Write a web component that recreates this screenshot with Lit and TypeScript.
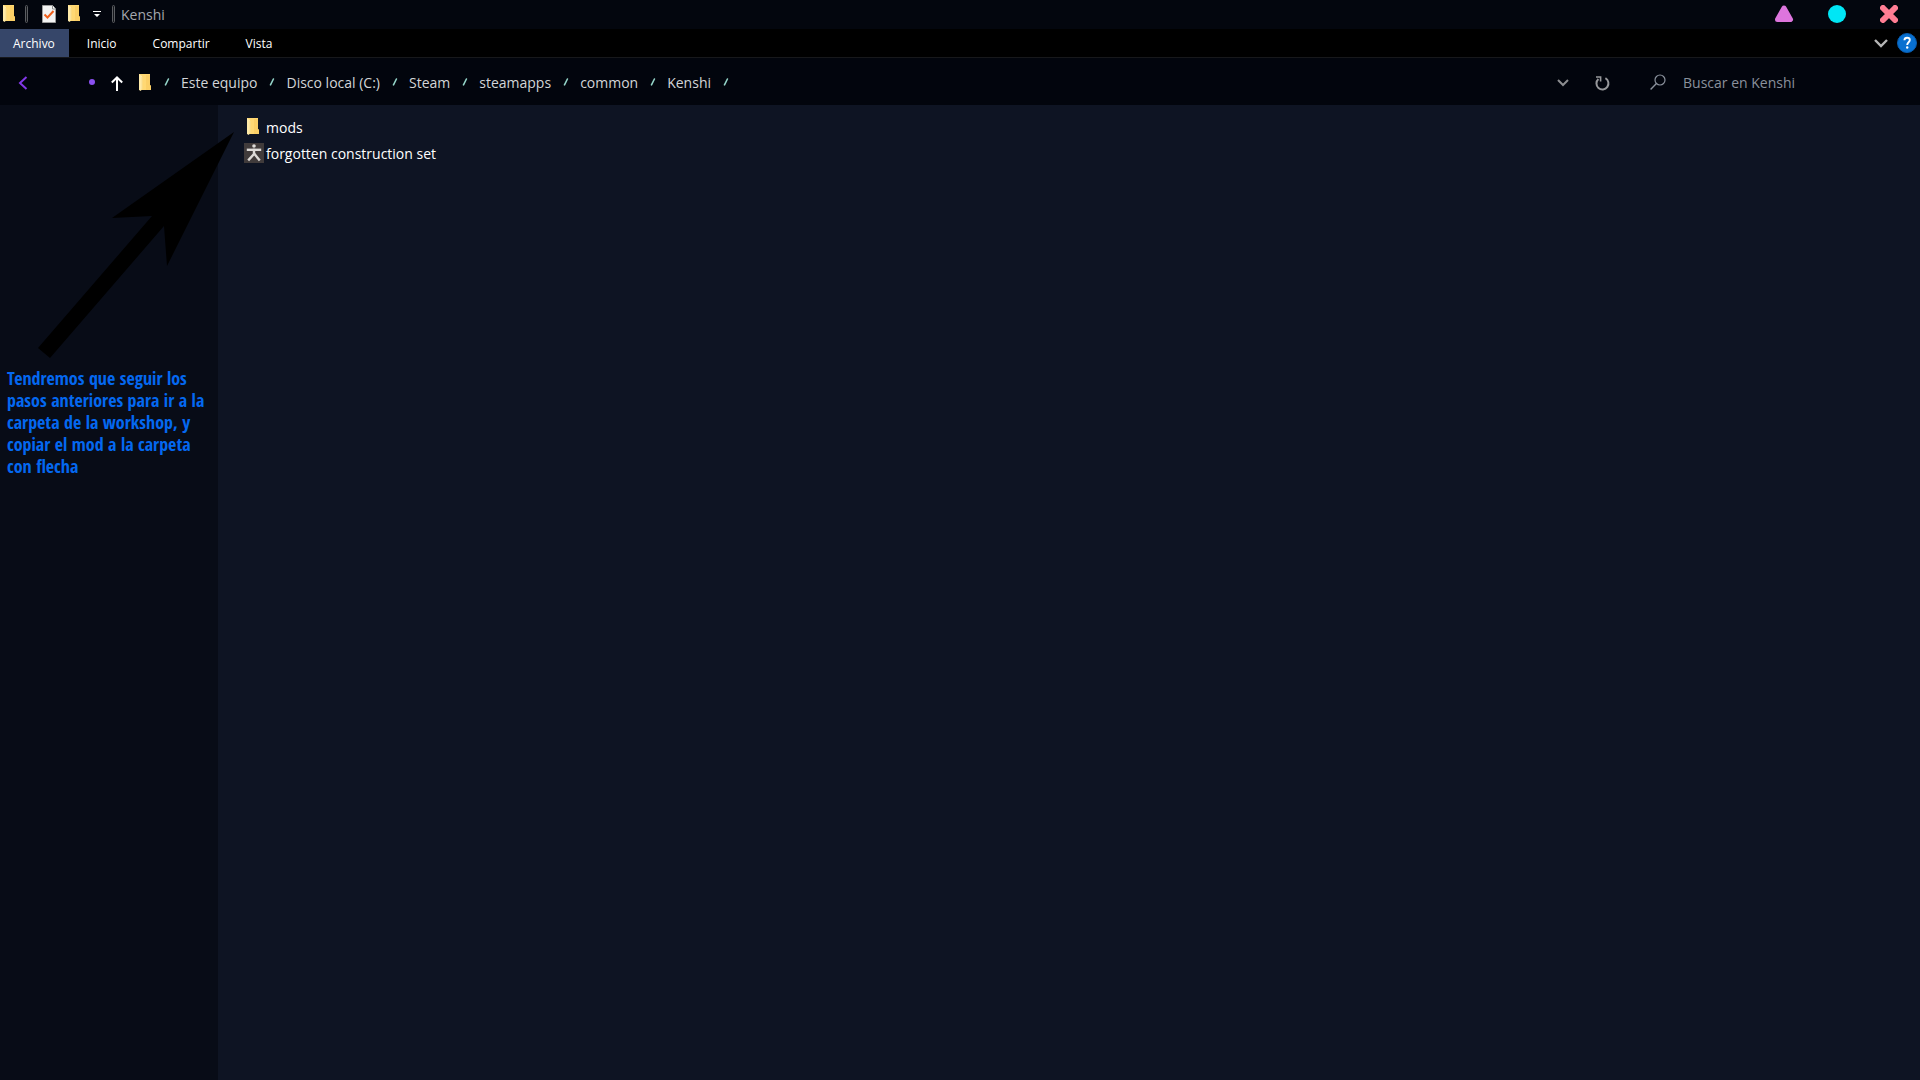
import { LitElement, html, css, svg } from "lit";
import { customElement } from "lit/decorators.js";

const folder = html`<svg class="folder" width="14" height="18" viewBox="0 0 14 18" aria-hidden="true">
  <path d="M1 0H12V11L13 12V16H1Z" fill="#ffd873" />
  <path d="M8 1H12V11L13 12V16H8Z" fill="#fbcf66" />
  <path d="M1 0L4 2V14L3 17L1 16Z" fill="#ffeaa8" />
  <path d="M4 3V15" stroke="#f7dc8f" />
</svg>`;

const slash = html`<svg class="slash" width="6" height="8" viewBox="0 0 6 8" aria-hidden="true">
  <path d="M1.5 6.8L4.4 1" stroke="#93d3c7" stroke-width="1.6" stroke-linecap="round" />
</svg>`;

const bar = html`<svg class="bar" width="4" height="18" viewBox="0 0 4 18" aria-hidden="true">
  <rect x="0.5" y="0.5" width="2" height="17" rx="1" fill="#15171c" stroke="#5b5d61" />
</svg>`;

const limb = (d: string) => svg`<path d=${d} stroke="#dcdad8" stroke-width="2.4" fill="none" stroke-linecap="square" />`;

@customElement("app-root")
export class AppRoot extends LitElement {
  static styles = css`
    :host {
      display: flex;
      flex-direction: column;
      min-height: 100vh;
      position: relative;
      background: #0e1423;
      color: #fff;
      font: 14px/20px "Segoe UI", "Open Sans", "Noto Sans", sans-serif;
    }
    * { box-sizing: border-box; }
    svg { display: block; flex: none; }
    button, input {
      font: inherit;
      color: inherit;
      background: none;
      border: 0;
      padding: 0;
      margin: 0;
      outline: 0;
    }
    a { color: inherit; text-decoration: none; }
    .title {
      display: flex;
      align-items: center;
      height: 29px;
      padding: 0 22px 1px 2px;
      background: #03060e;
    }
    .lead { padding: 0 10px 0 9px; }
    .check { margin: 0 11px 0 3px; }
    .custom { margin: 0 11px 0 12px; }
    h1 {
      margin: 0 auto 0 5px;
      padding-top: 2px;
      font-size: 14px;
      line-height: 20px;
      font-weight: 400;
      color: #a5a8ae;
    }
    .window { display: flex; gap: 34px; }
    .ribbon {
      display: flex;
      align-items: stretch;
      height: 29px;
      background: #000;
      border-bottom: 1px solid #17181b;
      font-size: 12px;
    }
    .tab { padding: 1px 18px 0; }
    .tab.active { padding: 1px 14px 0 13px; background: #364669; }
    .tools {
      display: flex;
      align-items: center;
      gap: 9px;
      margin-left: auto;
      padding-right: 3px;
    }
    .address {
      display: flex;
      align-items: center;
      height: 47px;
      padding-top: 3px;
      background: #02050d;
      color: #d3d5d8;
    }
    .back { margin-left: 18px; }
    .dot { margin: 0 16px 2px 61px; }
    .up { margin-right: 15px; }
    .crumbs {
      display: flex;
      align-items: center;
      margin: 0;
      padding: 0 0 0 12px;
      list-style: none;
      flex: 1;
    }
    .crumbs li { display: flex; align-items: center; }
    .crumbs .slash { margin: 0 11px 2px 12px; }
    .crumbs li:first-child .slash { margin-left: 0; }
    .drop { margin-right: 26px; }
    .search {
      display: flex;
      align-items: center;
      gap: 17px;
      width: 270px;
      margin-left: 40px;
      color: #8d939d;
    }
    .search svg { margin-bottom: 2px; }
    .search input { flex: 1; min-width: 0; }
    .search input::placeholder { color: #8a919c; opacity: 1; }
    .body { display: flex; flex: 1; }
    .side {
      width: 218px;
      background: #080c17;
      padding: 262px 0 0 7px;
    }
    .note {
      margin: 0;
      color: #0468f0;
      font: 700 18px/22px "Open Sans Condensed", "Noto Sans Condensed", "Open Sans", sans-serif;
      white-space: nowrap;
    }
    .files {
      flex: 1;
      margin: 0;
      padding: 10px 26px;
      list-style: none;
    }
    .files a { display: flex; align-items: center; gap: 2px; height: 26px; }
    .thumb { width: 20px; margin-bottom: 2px; flex: none; }
    .thumb .folder { margin-left: 2px; }
    .arrow { position: absolute; left: 38px; top: 132px; pointer-events: none; }
  `;

  private crumbs = ["Este equipo", "Disco local (C:)", "Steam", "steamapps", "common", "Kenshi"];

  render() {
    return html`
      <header class="title">
        ${folder}
        <span class="lead">${bar}</span>
        <button class="check" aria-label="Propiedades">
          <svg width="14" height="18" viewBox="0 0 14 18">
            <path d="M0.5 0.5H10.5L13.5 4V17.5H0.5Z" fill="#f3f3f3" stroke="#9c9c9c" />
            <path d="M10.5 0.5V4H13.5" fill="#fff" stroke="#8c8c8c" />
            <path d="M2.5 9.5L5.5 12.5L11.5 6" fill="none" stroke="#f0601c" stroke-width="2" />
          </svg>
        </button>
        <button aria-label="Nueva carpeta">${folder}</button>
        <button class="custom" aria-label="Personalizar">
          <svg width="8" height="8" viewBox="0 0 8 8" fill="#fff">
            <path d="M0 1H8V2H0ZM1 4H7L4 7Z" />
          </svg>
        </button>
        ${bar}
        <h1>Kenshi</h1>
        <div class="window">
          <button aria-label="Minimizar">
            <svg width="20" height="18" viewBox="0 0 20 18">
              <path d="M10 3L16.5 14.5H3.5Z" fill="#dd75dd" stroke="#dd75dd" stroke-width="5" stroke-linejoin="round" />
            </svg>
          </button>
          <button aria-label="Maximizar">
            <svg width="18" height="18" viewBox="0 0 18 18"><circle cx="9" cy="9" r="9" fill="#00e6f5" /></svg>
          </button>
          <button aria-label="Cerrar">
            <svg width="18" height="18" viewBox="0 0 18 18">
              <path d="M3 3L15 15M15 3L3 15" stroke="#ff7d94" stroke-width="6" stroke-linecap="round" />
            </svg>
          </button>
        </div>
      </header>

      <nav class="ribbon">
        <button class="tab active">Archivo</button>
        <button class="tab">Inicio</button>
        <button class="tab">Compartir</button>
        <button class="tab">Vista</button>
        <div class="tools">
          <button aria-label="Expandir la cinta">
            <svg width="14" height="9" viewBox="0 0 14 9"><path d="M1 1L7 7L13 1" fill="none" stroke="#b5b5b5" stroke-width="2.4" /></svg>
          </button>
          <button aria-label="Ayuda">
            <svg width="20" height="20" viewBox="0 0 20 20">
              <circle cx="10" cy="10" r="9.5" fill="#0870d0" stroke="#0a5cae" />
              <path d="M7.4 7.3C7.5 5.6 8.6 4.8 10.1 4.8C11.7 4.8 12.8 5.7 12.8 7.1C12.8 9.2 10.2 9.3 10.2 11.9" fill="none" stroke="#fff" stroke-width="1.9" />
              <circle cx="10.2" cy="14.5" r="1.2" fill="#fff" />
            </svg>
          </button>
        </div>
      </nav>

      <div class="address">
        <button class="back" aria-label="Atrás">
          <svg width="10" height="14" viewBox="0 0 10 14"><path d="M8.5 1L2 7L8.5 13" fill="none" stroke="#8238e8" stroke-width="2" /></svg>
        </button>
        <button class="dot" aria-label="Ubicaciones recientes">
          <svg width="6" height="6" viewBox="0 0 6 6"><circle cx="3" cy="3" r="3" fill="#8a50f0" /></svg>
        </button>
        <button class="up" aria-label="Subir">
          <svg width="12" height="15" viewBox="0 0 12 15"><path d="M6 15V1.5M0.8 6.5L6 1.5L11.2 6.5" fill="none" stroke="#fff" stroke-width="2" /></svg>
        </button>
        ${folder}
        <ul class="crumbs">
          <li>${slash}</li>
          ${this.crumbs.map((c) => html`<li><a href="#">${c}</a>${slash}</li>`)}
        </ul>
        <button class="drop" aria-label="Ubicaciones anteriores">
          <svg width="12" height="8" viewBox="0 0 12 8"><path d="M1 1L6 6L11 1" fill="none" stroke="#8c8d90" stroke-width="2" /></svg>
        </button>
        <button aria-label="Actualizar">
          <svg width="15" height="15" viewBox="0 0 15 15">
            <path d="M10.4 2.2A6 6 0 1 1 3.4 3" fill="none" stroke="#97989b" stroke-width="2" />
            <path d="M1 1H5.6V5.6" fill="none" stroke="#97989b" stroke-width="1.6" />
          </svg>
        </button>
        <label class="search">
          <svg width="16" height="16" viewBox="0 0 16 16">
            <circle cx="10" cy="6" r="5" fill="none" stroke="#8a919c" stroke-width="1.2" />
            <path d="M6.4 9.6L0.6 15.4" stroke="#8a919c" stroke-width="1.4" />
          </svg>
          <input type="search" aria-label="Buscar en Kenshi" placeholder="Buscar en Kenshi" />
        </label>
      </div>

      <div class="body">
        <aside class="side">
          <p class="note">
            Tendremos que seguir los<br />pasos anteriores para ir a la<br />carpeta de la workshop, y<br />copiar el mod a la carpeta<br />con flecha
          </p>
        </aside>
        <ul class="files">
          <li><a href="#"><span class="thumb">${folder}</span>mods</a></li>
          <li>
            <a href="#"><span class="thumb">
              <svg width="20" height="20" viewBox="0 0 20 20" aria-hidden="true">
                <rect width="20" height="20" fill="#403b3b" />
                <circle cx="10" cy="3" r="1.8" fill="#dcdad8" />
                ${limb("M4 6.8H16")}
                ${limb("M10 7V11L5 16.5")}
                ${limb("M10.5 11L15 16.5")}
              </svg></span>forgotten construction set</a>
          </li>
        </ul>
      </div>

      <svg class="arrow" width="196" height="227" viewBox="0 0 196 227" aria-hidden="true">
        <path d="M196 0L129 134L126 94L12 226L0 216L114 84L74 86Z" fill="#000" />
      </svg>
    `;
  }
}
